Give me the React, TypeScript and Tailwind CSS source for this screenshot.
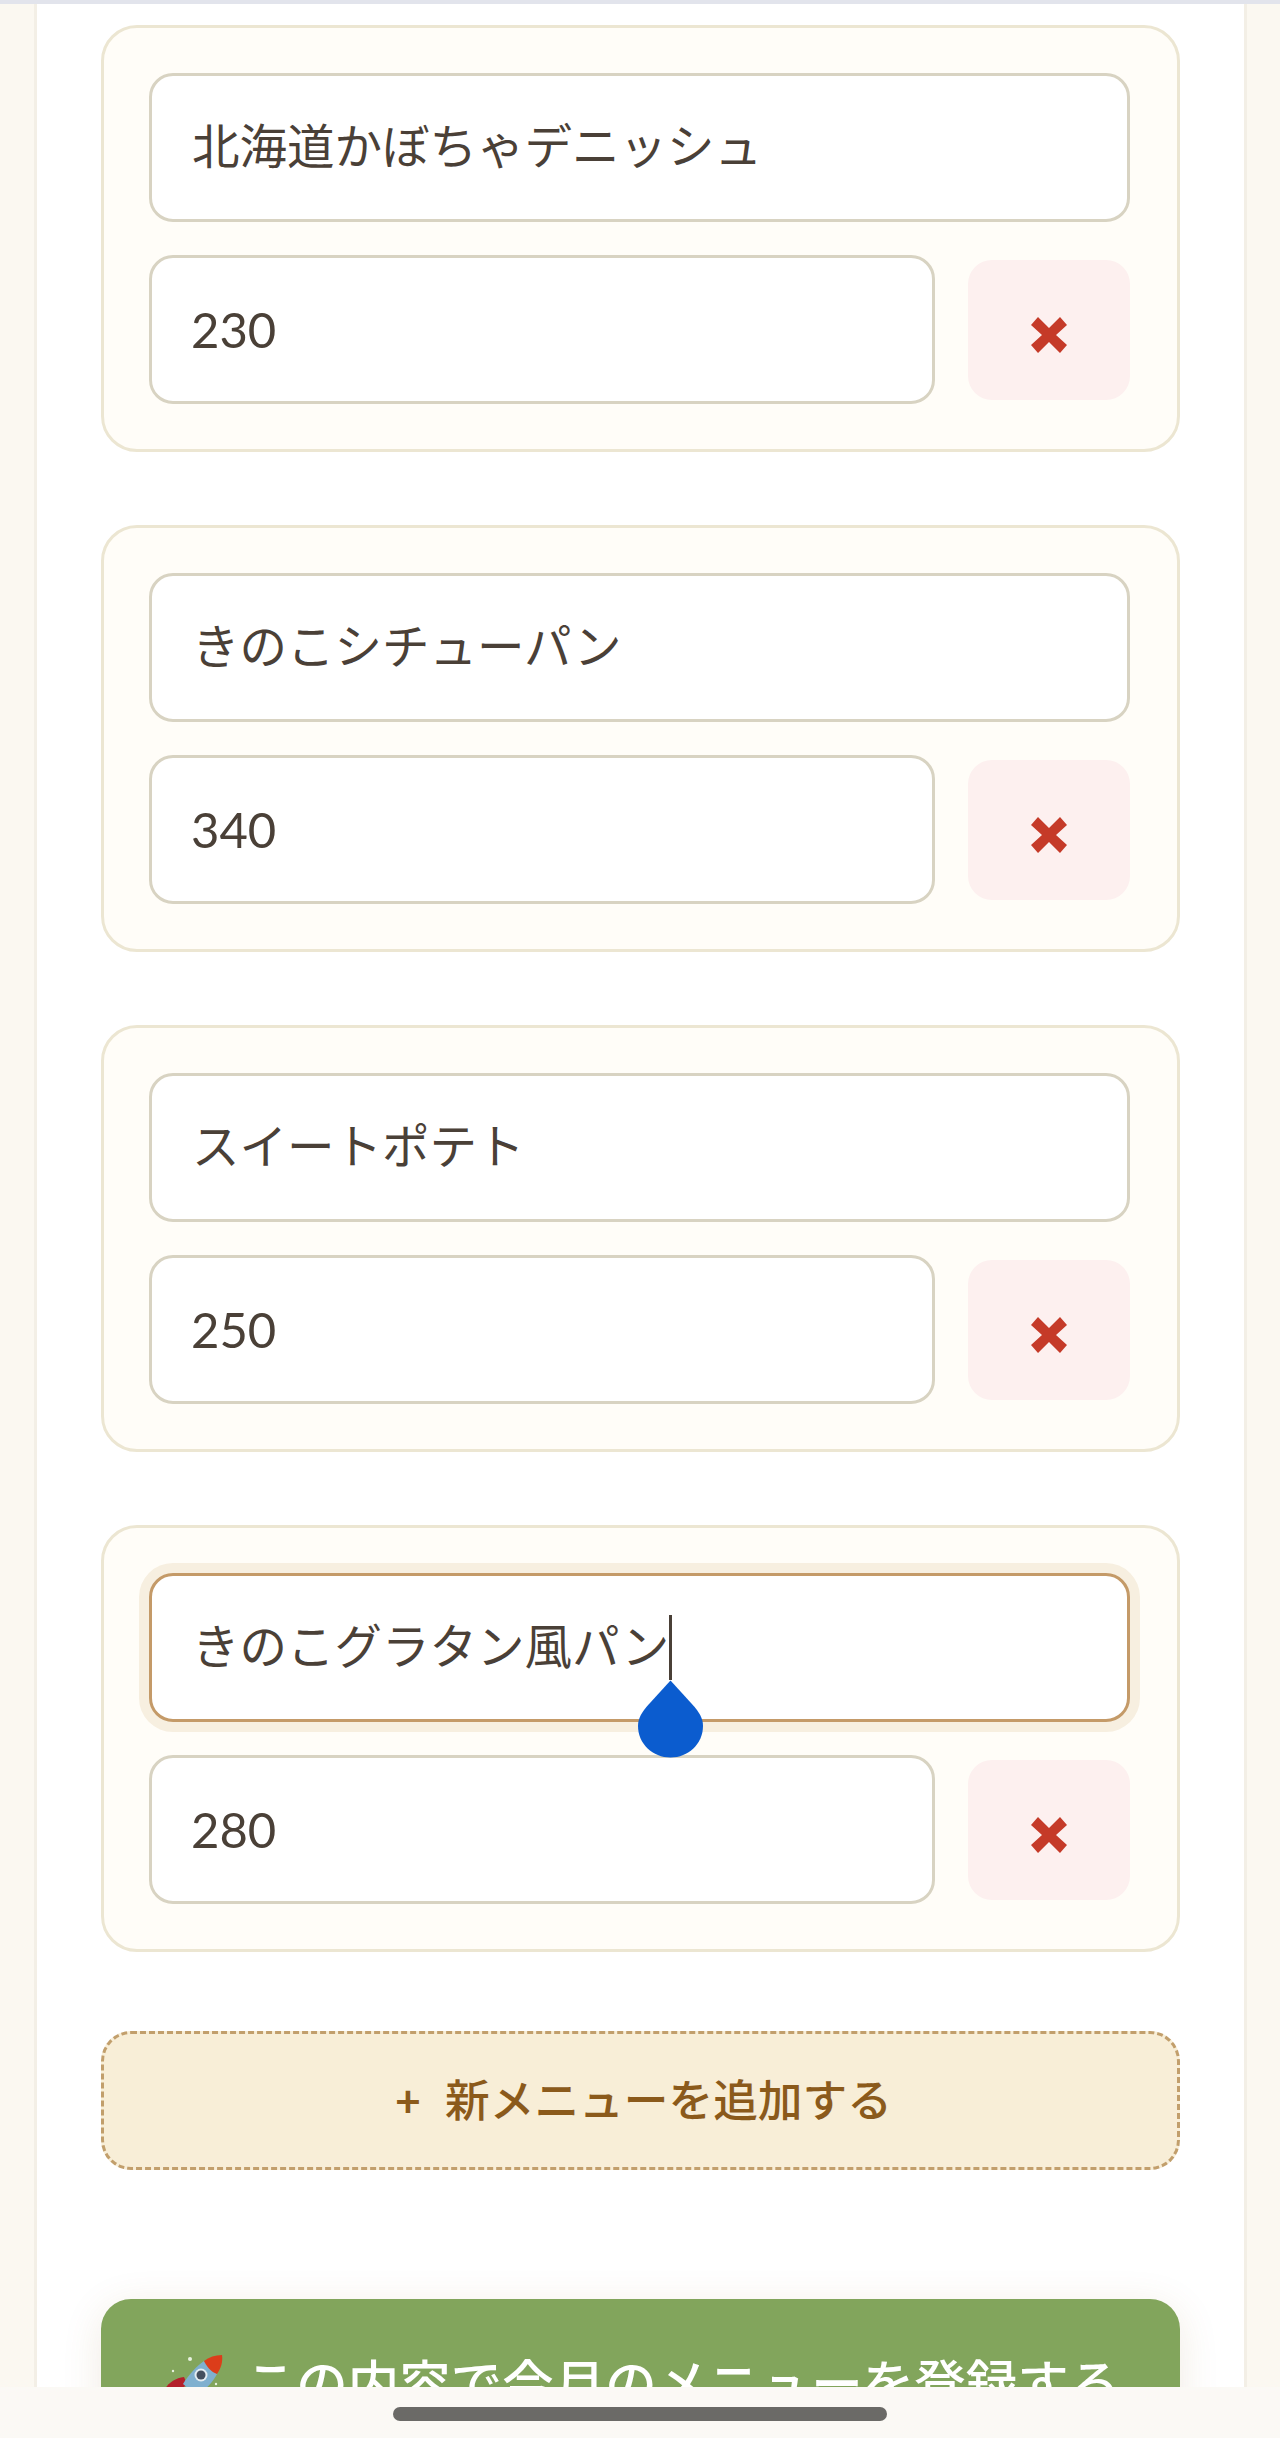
import React from 'react';

const items = [
  { name: '北海道かぼちゃデニッシュ', price: '230' },
  { name: 'きのこシチューパン', price: '340' },
  { name: 'スイートポテト', price: '250' },
  { name: 'きのこグラタン風パン', price: '280', focused: true },
];

function Rocket() {
  return (
    <svg width="64" height="64" viewBox="0 0 64 64" className="shrink-0">
      <path d="M4 37 C8 30 15 26 23 25 L26 32 L14 44 Z" fill="#b3202a" />
      <path d="M24 40 L32 33 L38 40 C36 48 32 56 24 62 L20 52 Z" fill="#b3202a" />
      <path d="M43 9 L56 22 C52 30 44 38 36 44 L22 32 C28 22 36 14 43 9 Z" fill="#7fb0cf" />
      <path d="M43 9 C48 5 54 3 61 3 C62 10 60 16 56 22 C50 20 46 15 43 9 Z" fill="#dc3d1a" />
      <circle cx="40" cy="23" r="6.5" fill="#e4edf2" />
      <circle cx="40" cy="23" r="4.5" fill="#44505f" />
      <circle cx="29" cy="7" r="2" fill="#e8f2e0" />
      <circle cx="12" cy="19" r="1.2" fill="#e8f2e0" />
      <circle cx="55" cy="32" r="1.2" fill="#e8f2e0" />
    </svg>
  );
}

function MenuCard({ name, price, focused }: { name: string; price: string; focused?: boolean }) {
  return (
    <div className="rounded-[36px] border-[3px] border-[#ece6d2] bg-[#fffdf8] pt-[45px] pr-[47px] pb-[45px] pl-[45px]">
      <div
        className={
          focused
            ? 'relative flex h-[149px] items-center rounded-[24px] border-[3px] border-[#c49a68] bg-white pl-[40px] ring-[10px] ring-[#f7efe0]'
            : 'flex h-[149px] items-center rounded-[24px] border-[3px] border-[#d8d3c2] bg-white pl-[40px]'
        }
      >
        <span className="pb-[3px] text-[47.5px] leading-none text-[#4a4037]">{name}</span>
        {focused && (
          <span className="relative flex h-[65px] w-[3px] shrink-0 bg-[#4a4037]">
            <svg
              width="65"
              height="78"
              viewBox="0 0 66 78"
              className="absolute top-[65px] left-[-31px] max-w-none"
            >
              <path d="M33 0 L55 24 C62 32 66 38 66 46 C66 64 51 78 33 78 C15 78 0 64 0 46 C0 38 4 32 11 24 Z" fill="#0b5ccf" />
            </svg>
          </span>
        )}
      </div>
      <div className="mt-[33px] flex items-center gap-[33px]">
        <div className="flex h-[149px] flex-1 items-center rounded-[24px] border-[3px] border-[#d8d3c2] bg-white pl-[39px]">
          <span className="text-[49px] leading-none text-[#4a4037]">{price}</span>
        </div>
        <div className="flex h-[140px] w-[162px] items-center justify-center rounded-[24px] bg-[#fdf0ef] pt-[10px]">
          <svg width="36" height="36" viewBox="0 0 36 36">
            <path d="M7 0 L18 11 L29 0 L36 8 L25 18 L36 28 L29 36 L18 25 L7 36 L0 28 L11 18 L0 8 Z" fill="#c53a28" />
          </svg>
        </div>
      </div>
    </div>
  );
}

export default function App() {
  return (
    <div className="relative h-screen overflow-hidden bg-[#fbf8f1] font-['Lato','Noto_Sans_CJK_JP',sans-serif]">
      <div className="h-[4px] bg-[#e2e4ec]" />
      <div className="mr-[33px] ml-[34px] h-full border-x-[3px] border-[#f3efe6] bg-white px-[64px] pt-[21px]">
        <div className="flex flex-col gap-[73px]">
          {items.map((item) => (
            <MenuCard key={item.name} {...item} />
          ))}
        </div>
        <button className="mt-[79px] flex h-[139px] w-full items-center justify-center gap-[24px] rounded-[30px] border-[3px] border-dashed border-[#c29f6c] bg-[#f8eed7] pl-[6px] text-[44.7px] font-medium text-[#8b5a1b]">
          <span className="font-bold">+</span>
          <span>新メニューを追加する</span>
        </button>
        <button className="mt-[129px] flex h-[170px] w-full items-center justify-center gap-[20px] rounded-[30px] bg-[#82a55c] text-[51.5px] font-medium text-white shadow-[0_8px_40px_rgba(139,90,27,0.12)]">
          <Rocket />
          <span>この内容で今月のメニューを登録する</span>
        </button>
      </div>
      <div className="absolute inset-x-0 bottom-0 flex h-[51px] justify-center bg-[#fbf9f5] pt-[20px]">
        <div className="h-[14px] w-[494px] rounded-full bg-[#6b6a67]" />
      </div>
    </div>
  );
}
